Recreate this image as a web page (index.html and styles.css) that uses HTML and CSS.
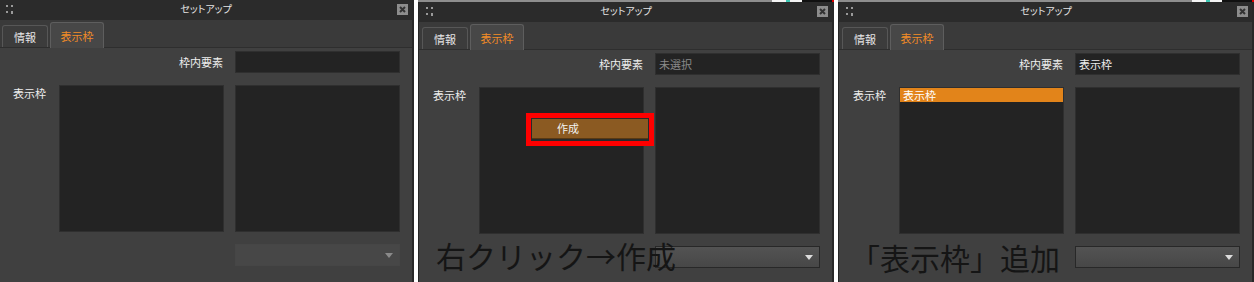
FILE: index.html
```html
<!DOCTYPE html>
<html lang="ja">
<head>
    <meta charset="UTF-8">
    <meta name="viewport" content="width=device-width, initial-scale=1.0">
    <title>セットアップ 表示枠</title>
    <link rel="stylesheet" href="styles.css">
</head>
<body>
    <div class="screens">

        <!-- 1: 初期状態 -->
        <div class="shot shot-first">
            <div class="window">
                <div class="titlebar">
                    <svg class="grip" width="7" height="10" viewBox="0 0 7 10"><rect x="0" y="1" width="2" height="2"/><rect x="5" y="1" width="2" height="2"/><rect x="0" y="7" width="2" height="2"/><rect x="5" y="7" width="2" height="3"/></svg>
                    <span class="title">セットアップ</span>
                    <svg class="close" width="11" height="11" viewBox="0 0 11 11"><rect width="11" height="11" fill="#8d8d8d"/><path d="M3 3 L8 8 M8 3 L3 8" stroke="#333" stroke-width="2"/></svg>
                </div>
                <div class="tabs">
                    <div class="tab">情報</div>
                    <div class="tab active">表示枠</div>
                </div>
                <div class="form">
                    <div class="label label-right">枠内要素</div>
                    <div class="field"></div>
                    <div class="label">表示枠</div>
                    <div class="list"></div>
                    <div class="list"></div>
                    <div class="select off">
                        <svg width="8" height="5" viewBox="0 0 8 5"><path d="M0 0 H8 L4 5 Z"/></svg>
                    </div>
                </div>
            </div>
        </div>

        <!-- 2: 右クリック -->
        <div class="shot">
            <div class="window">
                <div class="titlebar">
                    <svg class="grip" width="7" height="10" viewBox="0 0 7 10"><rect x="0" y="1" width="2" height="2"/><rect x="5" y="1" width="2" height="2"/><rect x="0" y="7" width="2" height="2"/><rect x="5" y="7" width="2" height="3"/></svg>
                    <span class="title">セットアップ</span>
                    <svg class="close" width="11" height="11" viewBox="0 0 11 11"><rect width="11" height="11" fill="#8d8d8d"/><path d="M3 3 L8 8 M8 3 L3 8" stroke="#333" stroke-width="2"/></svg>
                </div>
                <div class="tabs">
                    <div class="tab">情報</div>
                    <div class="tab active">表示枠</div>
                </div>
                <div class="form">
                    <div class="label label-right">枠内要素</div>
                    <div class="field placeholder">未選択</div>
                    <div class="label">表示枠</div>
                    <div class="list"></div>
                    <div class="list"></div>
                    <div class="select">
                        <svg width="8" height="5" viewBox="0 0 8 5"><path d="M0 0 H8 L4 5 Z"/></svg>
                    </div>
                </div>
                <div class="menu">
                    <div class="menu-item">作成</div>
                </div>
            </div>
            <div class="topbar"></div>
            <div class="note note-click">右クリック→作成</div>
        </div>

        <!-- 3: 追加後 -->
        <div class="shot">
            <div class="window">
                <div class="titlebar">
                    <svg class="grip" width="7" height="10" viewBox="0 0 7 10"><rect x="0" y="1" width="2" height="2"/><rect x="5" y="1" width="2" height="2"/><rect x="0" y="7" width="2" height="2"/><rect x="5" y="7" width="2" height="3"/></svg>
                    <span class="title">セットアップ</span>
                    <svg class="close" width="11" height="11" viewBox="0 0 11 11"><rect width="11" height="11" fill="#8d8d8d"/><path d="M3 3 L8 8 M8 3 L3 8" stroke="#333" stroke-width="2"/></svg>
                </div>
                <div class="tabs">
                    <div class="tab">情報</div>
                    <div class="tab active">表示枠</div>
                </div>
                <div class="form">
                    <div class="label label-right">枠内要素</div>
                    <div class="field">表示枠</div>
                    <div class="label">表示枠</div>
                    <div class="list">
                        <div class="list-item selected">表示枠</div>
                    </div>
                    <div class="list"></div>
                    <div class="select">
                        <svg width="8" height="5" viewBox="0 0 8 5"><path d="M0 0 H8 L4 5 Z"/></svg>
                    </div>
                </div>
            </div>
            <div class="topbar"></div>
            <div class="note note-added">「表示枠」追加</div>
        </div>

    </div>
</body>
</html>
```

FILE: styles.css
```css
/* 全体 */
body {
    margin: 0;
    background: #ffffff;
    font-family: "Noto Sans CJK JP", "Noto Sans", sans-serif;
}

.screens {
    display: flex;
    gap: 4px;
    height: 282px;
    overflow: hidden;
}

.shot {
    position: relative;
    flex: none;
    width: 416px;
    height: 282px;
    overflow: hidden;
}

.shot-first {
    width: 414px;
}

.shot-first .window {
    margin: -2px 0 0 -2px;
}

/* ウィンドウ */
.window {
    position: relative;
    width: 416px;
    height: 286px;
    box-sizing: border-box;
    background: #404040;
    border-left: 1px solid #262626;
    border-right: 2px solid #282828;
    display: flex;
    flex-direction: column;
}

.titlebar {
    height: 22px;
    flex: none;
    background: #2b2b2b;
    display: flex;
    align-items: center;
    padding: 0 4px 0 7px;
}

.grip {
    fill: #9a9a9a;
}

.title {
    flex: 1;
    text-align: center;
    color: #e4e4e4;
    font-size: 10px;
    font-feature-settings: "palt";
    line-height: 22px;
    padding-left: 2px;
}

/* タブ */
.tabs {
    height: 27px;
    flex: none;
    background: #3a3a3a;
    border-bottom: 1px solid #2e2e2e;
    display: flex;
    align-items: flex-end;
    gap: 2px;
    padding-left: 3px;
}

.tab {
    width: 46px;
    height: 22px;
    box-sizing: border-box;
    border: 1px solid #575757;
    border-bottom: none;
    border-radius: 3px 3px 0 0;
    background: #3c3c3c;
    color: #e6e6e6;
    font-size: 11px;
    display: flex;
    align-items: center;
    justify-content: center;
}

.tab.active {
    width: 54px;
    height: 26px;
    margin-bottom: -1px;
    background: #474747;
    border-color: #5e5e5e;
    color: #f28c28;
}

/* フォーム */
.form {
    display: grid;
    grid-template-columns: 35px 165px 165px;
    grid-template-rows: 22px 147px 22px;
    column-gap: 11px;
    row-gap: 12px;
    padding: 3px 0 0 14px;
}

.label {
    color: #eeeeee;
    font-size: 11px;
    line-height: 15px;
    padding-top: 1px;
    white-space: nowrap;
}

.label-right {
    grid-column: 1 / span 2;
    justify-self: end;
    align-self: center;
    padding: 0 1px 0 0;
}

.field {
    grid-column: 3;
    background: #232323;
    border: 1px solid #2f2f2f;
    box-sizing: border-box;
    color: #eeeeee;
    font-size: 11px;
    line-height: 20px;
    padding-left: 3px;
}

.field.placeholder {
    color: #8a8a8a;
}

.list {
    background: #232323;
    border: 1px solid #2f2f2f;
    box-sizing: border-box;
}

.list-item {
    height: 14px;
    color: #ffffff;
    font-size: 11px;
    line-height: 14px;
    padding-left: 3px;
}

.list-item.selected {
    background: #e2841a;
}

.select {
    grid-column: 3;
    background: linear-gradient(#535353, #474747);
    border: 1px solid #282828;
    box-sizing: border-box;
    display: flex;
    align-items: center;
    justify-content: flex-end;
    padding-right: 6px;
    fill: #dddddd;
}

.select.off {
    background: #474747;
    border-color: #464646;
    fill: #8a8a8a;
}

/* 右クリックメニュー */
.menu {
    position: absolute;
    left: 107px;
    top: 113px;
    width: 128px;
    height: 33px;
    box-sizing: border-box;
    border: 5px solid #ff0000;
    background: #2a2a2a;
    padding: 1px;
}

.menu-item {
    height: 20px;
    box-sizing: border-box;
    background: #8b5a22;
    border-bottom: 1px solid #5a3912;
    color: #f2f2f2;
    font-size: 11px;
    line-height: 19px;
    padding-left: 25px;
}

/* 上端の切れ端 */
.topbar {
    position: absolute;
    left: 0;
    top: 0;
    width: 416px;
    height: 2px;
    background: linear-gradient(to right, #8e8e8e 0 354px, #f4f4f4 354px 368px, #3cc8b4 368px 372px, #f4f4f4 372px 384px, #111111 384px 414px, #e00000 414px);
}

/* 注記 */
.note {
    position: absolute;
    color: #151515;
    font-size: 30px;
    line-height: 30px;
    white-space: nowrap;
}

.note-click {
    left: 18px;
    top: 240px;
}

.note-added {
    left: 12px;
    top: 242px;
}
```
